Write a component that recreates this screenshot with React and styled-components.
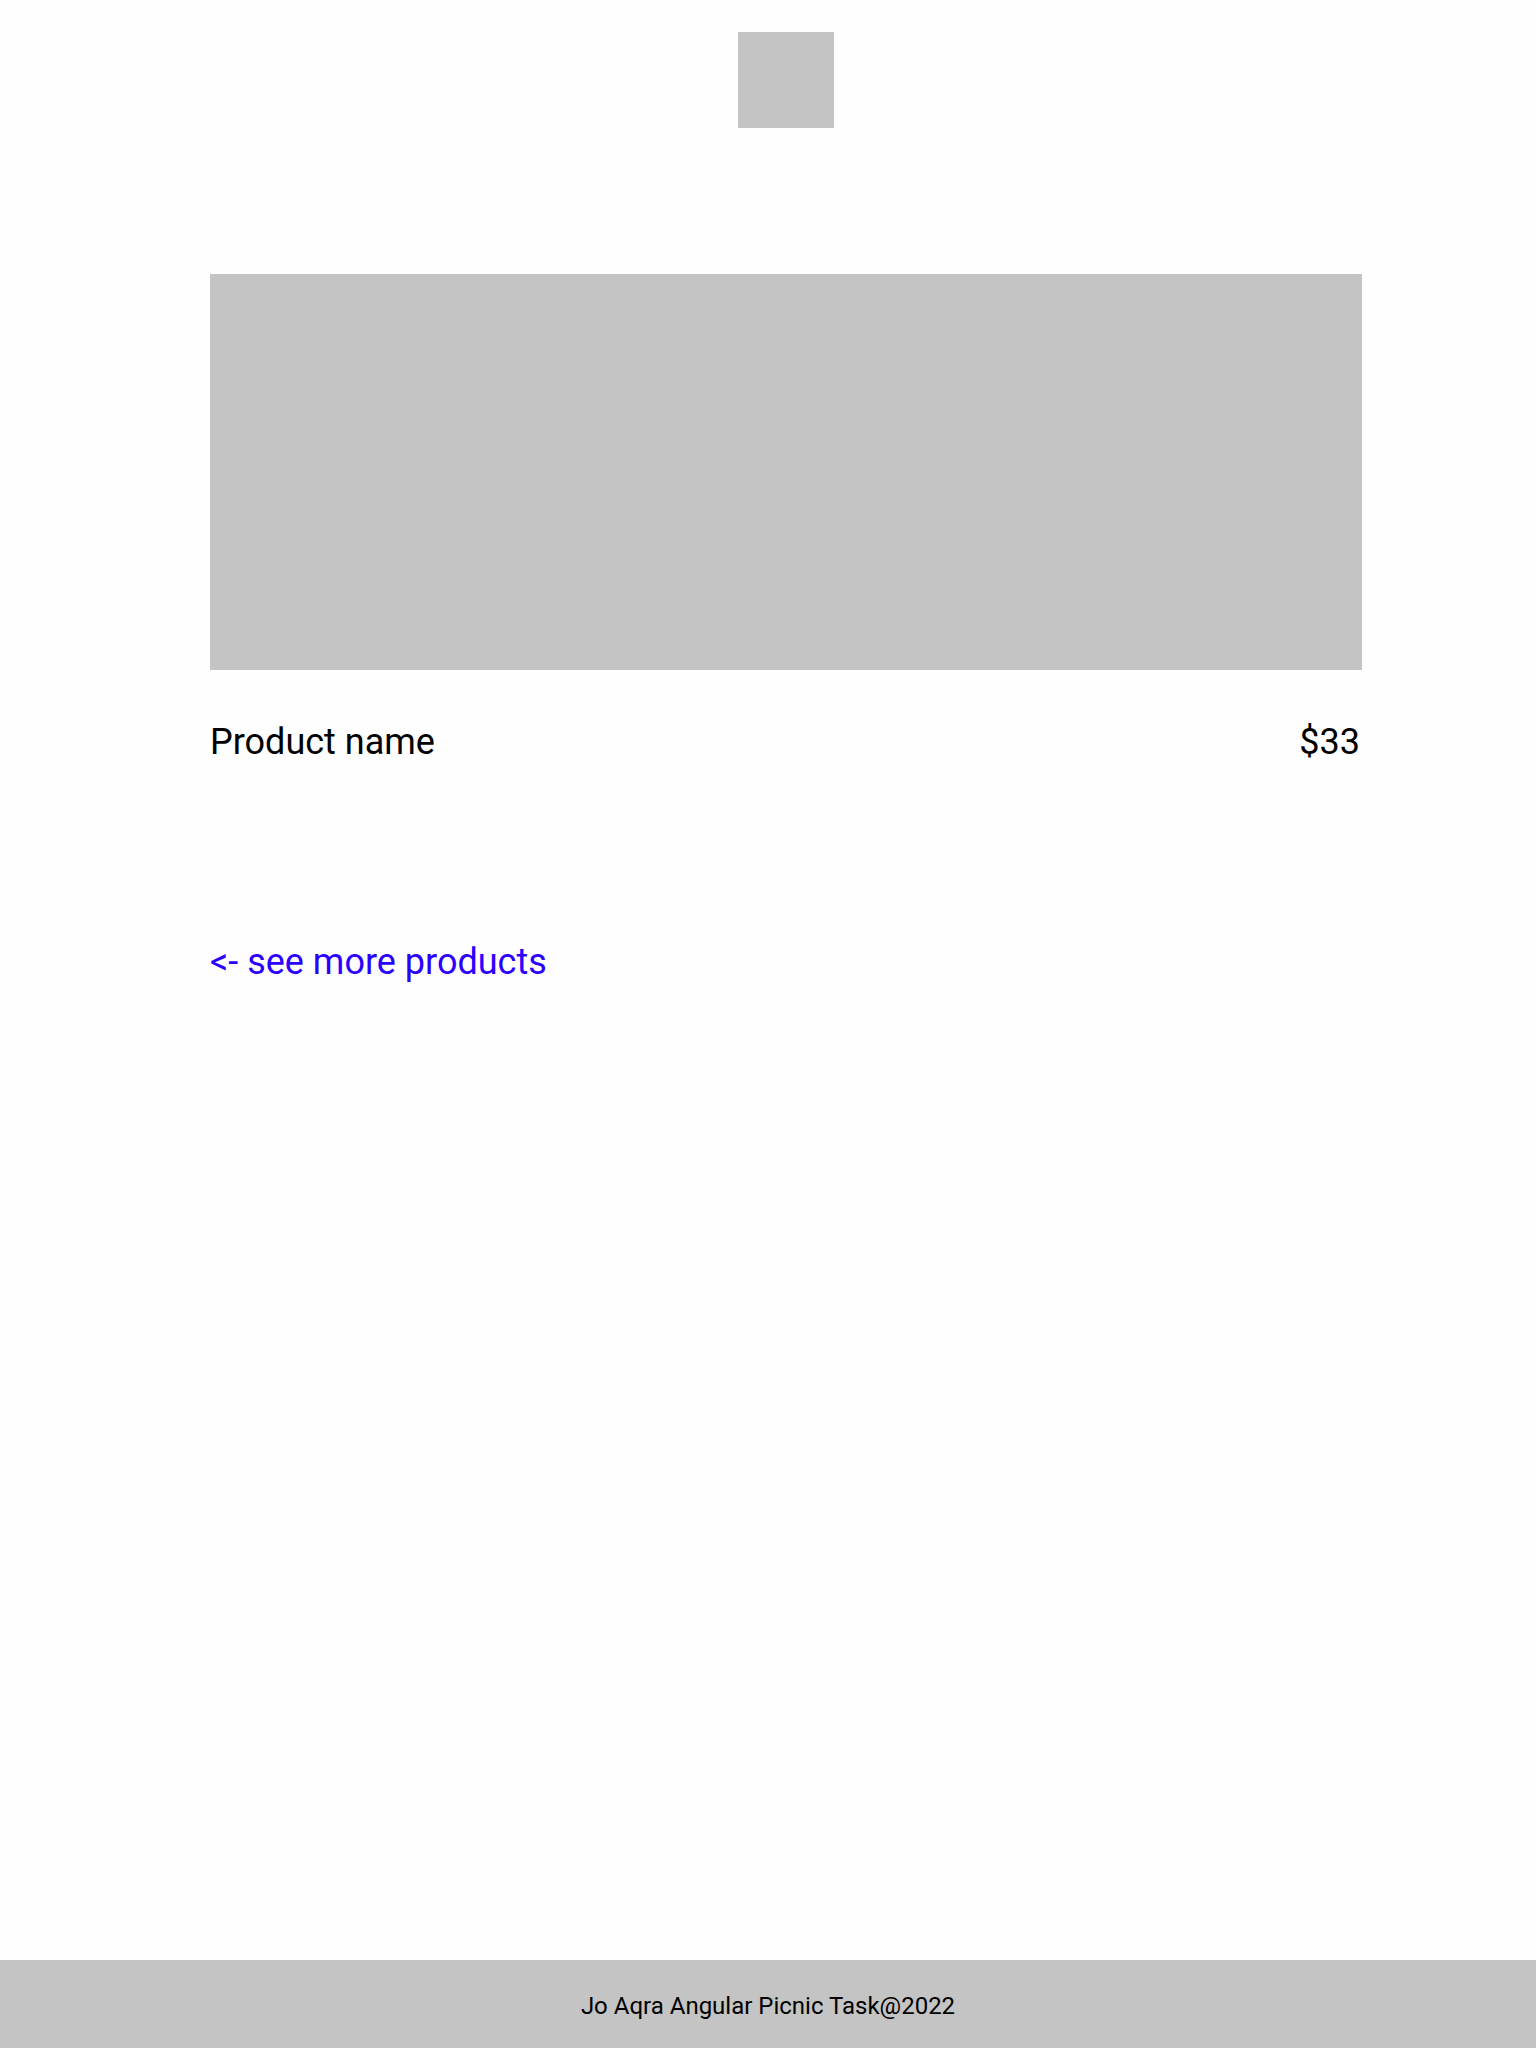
import React from "react";
import styled, { createGlobalStyle } from "styled-components";

const GlobalStyle = createGlobalStyle`
  html, body {
    margin: 0;
    padding: 0;
    background: #fefefe;
  }
  body {
    font-family: Roboto, "Liberation Sans", Arial, sans-serif;
    color: #000;
  }
  * { box-sizing: border-box; }
`;

const Page = styled.div`
  min-height: 2048px;
  display: flex;
  flex-direction: column;
`;

const Main = styled.main`
  flex: 1;
  padding-left: 36px;
`;

const Content = styled.div`
  width: 1152px;
  margin: 0 auto;
  display: flex;
  flex-direction: column;
`;

const Header = styled.header`
  display: flex;
  justify-content: center;
  padding-top: 32px;
`;

const Logo = styled.div`
  width: 96px;
  height: 96px;
  background: #c4c4c4;
`;

const ProductImage = styled.div`
  margin-top: 146px;
  height: 396px;
  background: #c4c4c4;
`;

const InfoRow = styled.div`
  margin-top: 51px;
  display: flex;
  justify-content: space-between;
  align-items: baseline;
  font-size: 36px;
  line-height: normal;
`;

const Name = styled.span``;

const Price = styled.span`
  margin-right: 2px;
`;

const BackLink = styled.a`
  margin-top: 178px;
  align-self: flex-start;
  font-size: 36px;
  line-height: normal;
  color: #2b00ff;
  text-decoration: none;
  cursor: pointer;
`;

const Footer = styled.footer`
  height: 88px;
  background: #c4c4c4;
  display: flex;
  justify-content: center;
  padding-top: 32px;
  font-size: 24px;
  line-height: normal;
`;

export default function App() {
  return (
    <>
      <GlobalStyle />
      <Page>
        <Main>
          <Content>
            <Header>
              <Logo />
            </Header>
            <ProductImage />
            <InfoRow>
              <Name>Product name</Name>
              <Price>$33</Price>
            </InfoRow>
            <BackLink>&lt;- see more products</BackLink>
          </Content>
        </Main>
        <Footer>Jo Aqra Angular Picnic Task@2022</Footer>
      </Page>
    </>
  );
}
